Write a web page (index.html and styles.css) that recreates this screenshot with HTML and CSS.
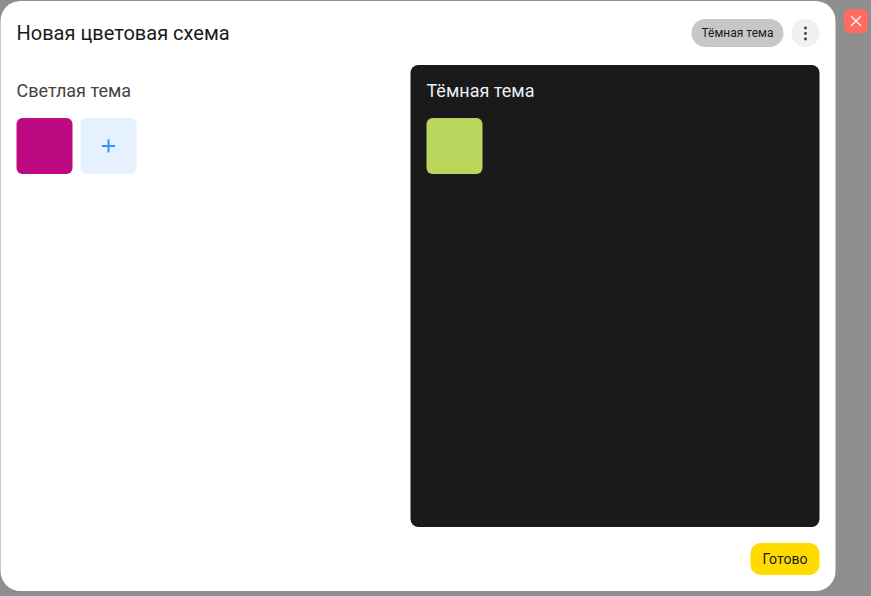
FILE: index.html
```html
<!DOCTYPE html>
<html lang="ru">
<head>
<meta charset="utf-8">
<title>Новая цветовая схема</title>
<link rel="stylesheet" href="styles.css">
</head>
<body>
<div class="stage">
  <div class="modal">
    <header class="head">
      <h1 class="title">Новая цветовая схема</h1>
      <div class="head-actions">
        <button class="pill">Тёмная тема</button>
        <button class="more" aria-label="Ещё">
          <svg width="4" height="15" viewBox="0 0 4 15"><circle cx="2" cy="2" r="1.4"/><circle cx="2" cy="7.5" r="1.4"/><circle cx="2" cy="13" r="1.4"/></svg>
        </button>
      </div>
    </header>
    <main class="cols">
      <section class="panel">
        <h2 class="panel-title">Светлая тема</h2>
        <div class="swatches">
          <div class="swatch magenta"></div>
          <button class="swatch add" aria-label="Добавить">
            <svg width="14" height="14" viewBox="0 0 14 14"><path d="M7 .5v13M.5 7h13"/></svg>
          </button>
        </div>
      </section>
      <section class="panel dark">
        <h2 class="panel-title">Тёмная тема</h2>
        <div class="swatches">
          <div class="swatch lime"></div>
        </div>
      </section>
    </main>
    <footer class="foot">
      <button class="done">Готово</button>
    </footer>
  </div>
  <button class="close" aria-label="Закрыть">
    <svg width="12" height="12" viewBox="0 0 12 12"><path d="M1 1l10 10M11 1L1 11"/></svg>
  </button>
</div>
</body>
</html>
```
FILE: styles.css
```css
* { box-sizing: border-box; }
html, body { margin: 0; height: 100%; }
body {
  background: #8e8e8e;
  font-family: Roboto, "Liberation Sans", sans-serif;
  overflow: hidden;
}
button { font-family: inherit; border: 0; padding: 0; cursor: pointer; }
.stage {
  display: flex;
  align-items: flex-start;
  gap: 9px;
  padding-top: 1px;
}
.modal {
  width: 835px;
  height: 590px;
  background: #fff;
  border-radius: 20px;
  padding: 18px 16px 16px;
  display: flex;
  flex-direction: column;
  transform: translateX(0.5px);
}
.head {
  height: 28px;
  display: flex;
  align-items: center;
  justify-content: space-between;
}
.title {
  margin: 0;
  font-size: 20px;
  font-weight: 400;
  color: #1a1a1a;
}
.head-actions { display: flex; gap: 8px; align-items: center; }
.pill {
  width: 92px;
  height: 28px;
  border-radius: 14px;
  background: #c7c7c7;
  color: #1a1a1a;
  font-size: 12px;
}
.more {
  width: 28px;
  height: 28px;
  border-radius: 50%;
  background: #f0f0f0;
  display: flex;
  align-items: center;
  justify-content: center;
}
.more svg { fill: #3a3a3a; }
.cols {
  flex: 1;
  margin-top: 18px;
  display: grid;
  grid-template-columns: 1fr 409px;
  min-height: 0;
}
.panel { padding: 16px 0; }
.panel.dark {
  background: #1a1a1a;
  border-radius: 8px;
  padding: 16px;
}
.panel-title {
  margin: 0;
  font-size: 18px;
  line-height: 19px;
  font-weight: 400;
  color: #444;
}
.dark .panel-title { color: #e8f0f8; }
.swatches {
  display: flex;
  gap: 8px;
  margin-top: 18px;
}
.swatch {
  width: 56px;
  height: 56px;
  border-radius: 6px;
}
.magenta { background: #bd0a82; }
.lime { background: #bad65c; }
.add {
  background: #e5f1ff;
  display: flex;
  align-items: center;
  justify-content: center;
}
.add svg { stroke: #3390ff; stroke-width: 2; fill: none; }
.foot {
  display: flex;
  justify-content: flex-end;
  margin-top: 16px;
}
.done {
  width: 69px;
  height: 32px;
  border-radius: 10px;
  background: #ffdb00;
  color: #1a1a1a;
  font-size: 14px;
}
.close {
  width: 24px;
  height: 24px;
  margin-top: 8px;
  border-radius: 6px;
  background: #ff6a62;
  display: flex;
  align-items: center;
  justify-content: center;
}
.close svg { stroke: #fff; stroke-width: 1.3; fill: none; }
```
